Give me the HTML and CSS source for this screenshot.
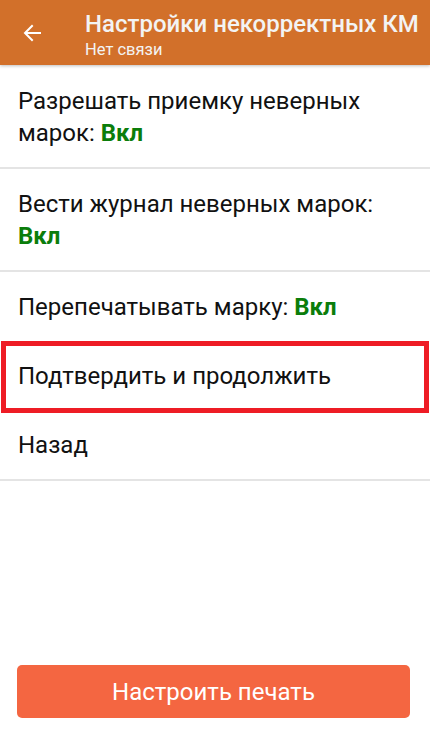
FILE: index.html
```html
<!DOCTYPE html>
<html lang="ru">
<head>
<meta charset="utf-8">
<title>Настройки некорректных КМ</title>
<link rel="stylesheet" href="styles.css">
</head>
<body>
<div class="screen">
  <header class="appbar">
    <div class="back">
      <svg width="18" height="18" viewBox="0 0 18 18" aria-hidden="true">
        <path d="M17 9H2.5M9 2L2 9l7 7" fill="none" stroke="#fff" stroke-width="2" stroke-linecap="square"/>
      </svg>
    </div>
    <div class="titles">
      <div class="title">Настройки некорректных КМ</div>
      <div class="subtitle">Нет связи</div>
    </div>
  </header>
  <main class="list">
    <div class="item">Разрешать приемку неверных марок: <b class="on">Вкл</b></div>
    <div class="item">Вести журнал неверных марок: <b class="on">Вкл</b></div>
    <div class="item">Перепечатывать марку: <b class="on">Вкл</b></div>
    <div class="item highlighted">Подтвердить и продолжить</div>
    <div class="item">Назад</div>
  </main>
  <div class="footer">
    <button class="print">Настроить печать</button>
  </div>
</div>
</body>
</html>
```
FILE: styles.css
```css
* { box-sizing: border-box; }
html, body { margin: 0; padding: 0; background: #fff; }
body { font-family: Roboto, "Noto Sans", sans-serif; }
.screen {
  height: 739px;
  display: flex;
  flex-direction: column;
}
.appbar {
  height: 65px;
  background: #D2702A;
  display: flex;
  align-items: flex-start;
  box-shadow: 0 1px 3px rgba(0,0,0,0.25);
  position: relative;
  z-index: 1;
  flex-shrink: 0;
}
.back {
  width: 85px;
  display: flex;
  padding-left: 23px;
  padding-top: 24px;
}
.back svg { display: block; }
.titles {
  display: flex;
  flex-direction: column;
  color: #f3f3f3;
  padding-top: 12px;
}
.title {
  font-size: 24px;
  font-weight: 500;
  line-height: 24px;
  white-space: nowrap;
}
.subtitle {
  font-size: 16.5px;
  line-height: 20px;
  margin-top: 4px;
}
.list {
  display: flex;
  flex-direction: column;
}
.item {
  font-size: 24px;
  line-height: 32px;
  color: #111;
  padding: 19px 40px 18px 18px;
  border-bottom: 2px solid #e4e4e4;
  position: relative;
}
.item:first-child { padding-top: 20px; }
.item:nth-child(3) { border-bottom: none; }
.item.highlighted { border-bottom: none; }
.item.highlighted::after {
  content: "";
  position: absolute;
  left: 1px;
  right: 1px;
  top: 0;
  bottom: -3px;
  border: 5px solid #EE1C25;
}
.on { color: #0B7D0B; font-weight: 700; }
.footer {
  margin-top: auto;
  padding: 0 20px 21px 17px;
}
.print {
  width: 100%;
  height: 53px;
  border: none;
  border-radius: 5px;
  background: #F46641;
  color: #fff;
  font-family: Roboto, "Noto Sans", sans-serif;
  font-size: 24px;
  display: block;
}
```
